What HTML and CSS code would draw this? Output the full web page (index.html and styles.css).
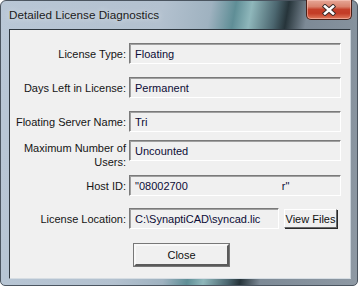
FILE: index.html
```html
<!DOCTYPE html>
<html lang="en">
<head>
<meta charset="UTF-8">
<meta name="viewport" content="width=device-width, initial-scale=1.0">
<title>Detailed License Diagnostics</title>
<link rel="stylesheet" href="styles.css">
</head>
<body>

<div class="window">
  <div class="titlebar">
    <span class="title">Detailed License Diagnostics</span>
    <button class="close-x" title="Close">
      <svg width="16" height="12" viewBox="0 0 16 12">
        <path d="M4 2.5 L12 9.5 M12 2.5 L4 9.5" stroke="#3a2a28" stroke-width="4.4" stroke-linecap="square"/>
        <path d="M4 2.5 L12 9.5 M12 2.5 L4 9.5" stroke="#ffffff" stroke-width="2.6" stroke-linecap="square"/>
      </svg>
    </button>
  </div>

  <div class="client">
    <div class="form">
      <div class="row r1">
        <label class="label">License Type:</label>
        <div class="field">Floating</div>
      </div>
      <div class="row r2">
        <label class="label">Days Left in License:</label>
        <div class="field">Permanent</div>
      </div>
      <div class="row r3">
        <label class="label">Floating Server Name:</label>
        <div class="field">Tri</div>
      </div>
      <div class="row r4">
        <label class="label two-line">Maximum Number of<br>Users:</label>
        <div class="field">Uncounted</div>
      </div>
      <div class="row r5">
        <label class="label">Host ID:</label>
        <div class="field"><span>"08002700</span><span class="tail">r"</span></div>
      </div>
      <div class="row r6">
        <label class="label">License Location:</label>
        <div class="field-group">
          <div class="field short">C:\SynaptiCAD\syncad.lic</div>
          <button class="btn view">View Files</button>
        </div>
      </div>
    </div>

    <div class="actions">
      <button class="btn default">Close</button>
    </div>
  </div>
</div>

</body>
</html>
```

FILE: styles.css
```css
body {
  margin: 0;
  padding: 0;
  background: #ffffff;
  font-family: "Liberation Sans", Arial, sans-serif;
}

.window {
  width: 358px;
  height: 286px;
  box-sizing: border-box;
  padding: 0 6px 6px 8px;
  display: flex;
  flex-direction: column;
  border-radius: 6px 6px 5px 5px;
  border: 1px solid #4b5560;
  background: linear-gradient(100deg, #b9c7d6 0%, #b3c1cf 40%, #9fb2c0 52%, #5f8e96 58%, #8fb7bb 62%, #4c6770 68%, #26343a 71%, #7d8a96 76%, #8e99a4 100%);
}

.titlebar {
  height: 28px;
  display: flex;
  align-items: flex-start;
  justify-content: space-between;
}

.title {
  margin-top: 7px;
  font-size: 11.7px;
  color: #1b1b1b;
  text-shadow: 0 0 6px rgba(255, 255, 255, 0.7);
}

.close-x {
  width: 46px;
  height: 20px;
  margin-top: -1px;
  margin-right: -1px;
  padding: 0;
  border: 1px solid #4a2018;
  border-top: none;
  border-radius: 0 0 5px 5px;
  background: linear-gradient(#e6a797 0%, #d9826d 35%, #c5402a 50%, #c33c26 70%, #e07a5c 100%);
  box-shadow: inset 0 0 0 1px rgba(255, 210, 200, 0.5);
  display: flex;
  align-items: center;
  justify-content: center;
}

.client {
  flex: 1;
  background: #f0f0f0;
  border: 1px solid #39424c;
  border-color: #2f3840 #c9d2da #d6dde3 #2f3840;
  display: flex;
  flex-direction: column;
  color: #151515;
  font-size: 11px;
}

.form {
  display: flex;
  flex-direction: column;
}

.row {
  display: grid;
  grid-template-columns: 116px 212px;
  column-gap: 3px;
  align-items: center;
  height: 21px;
}

.r1 { margin-top: 13px; }
.r2 { margin-top: 13px; }
.r3 { margin-top: 13px; }
.r4 { margin-top: 8px; align-items: start; }
.r5 { margin-top: 14px; }
.r6 { margin-top: 12px; }

.label {
  text-align: right;
  white-space: nowrap;
}

.two-line {
  line-height: 14px;
  margin-top: 1px;
}

.field {
  height: 21px;
  box-sizing: border-box;
  padding: 0 5px;
  display: flex;
  align-items: center;
  color: #0c0c36;
  background: #f0f0f0;
  border: 1px solid;
  border-color: #7a7a7a #ffffff #ffffff #7a7a7a;
  box-shadow: inset 1px 1px 0 #a0a0a0;
  white-space: nowrap;
  overflow: hidden;
}

.tail {
  margin-left: 94px;
}

.field-group {
  display: flex;
  align-items: center;
}

.short {
  width: 150px;
}

.btn {
  font-family: "Liberation Sans", Arial, sans-serif;
  font-size: 11px;
  color: #111111;
  background: #f0f0f0;
  padding: 0;
  white-space: nowrap;
  border: 1px solid;
  border-color: #ffffff #6a6a6a #6a6a6a #ffffff;
  box-shadow: 1px 1px 0 #2a2a2a;
}

.view {
  width: 53px;
  height: 19px;
  margin-left: 5px;
}

.actions {
  display: flex;
  padding-left: 124px;
  margin-top: 15px;
}

.default {
  width: 95px;
  height: 22px;
  border: 2px solid;
  border-color: #f8f8f8 #5a5a5a #5a5a5a #f8f8f8;
  box-shadow: 0 0 0 1px #777777;
}
```
